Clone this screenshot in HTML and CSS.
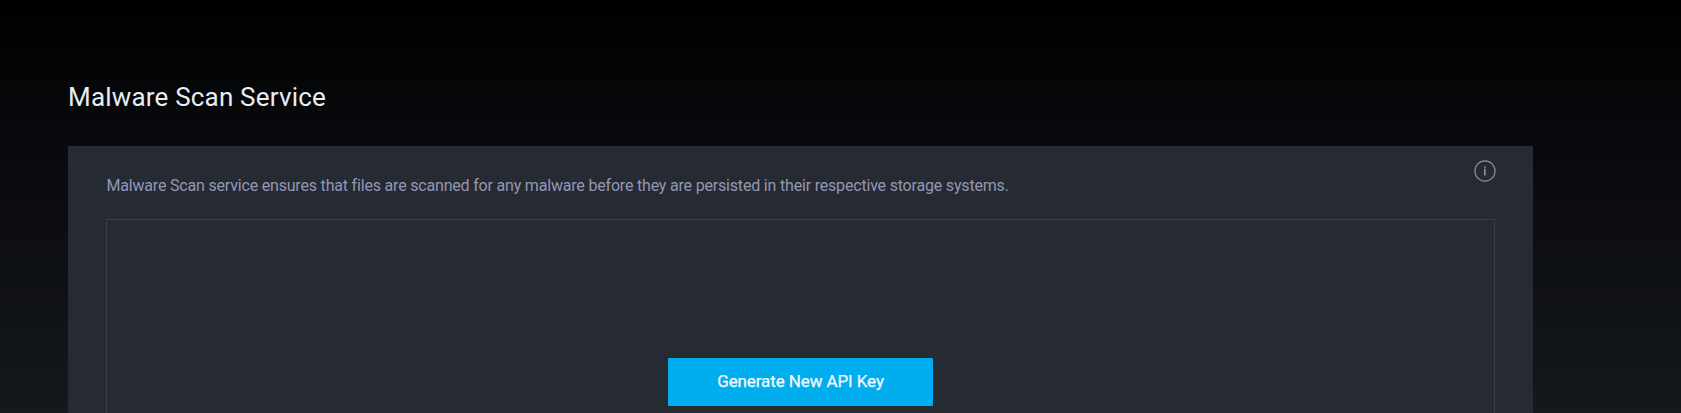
FILE: index.html
```html
<!DOCTYPE html>
<html lang="en">
<head>
<meta charset="utf-8">
<title>Malware Scan Service</title>
<link rel="stylesheet" href="styles.css">
</head>
<body>
<main class="page">
  <h1 class="title">Malware Scan Service</h1>
  <section class="panel">
    <svg class="info" viewBox="0 0 22 22" aria-label="Info"><circle cx="11" cy="11" r="10.1"/><path d="M10.8 8.8v6.7M10.8 6.2v1.5"/></svg>
    <p class="description">Malware Scan service ensures that files are scanned for any malware before they are persisted in their respective storage systems.</p>
    <div class="key-box"><button class="generate">Generate New API Key</button></div>
  </section>
</main>
</body>
</html>
```
FILE: styles.css
```css
* { box-sizing: border-box; }
body {
  margin: 0;
  background: #000;
  font-family: Roboto, sans-serif;
}
.page {
  display: flex;
  flex-direction: column;
  height: 413px;
  padding: 80px 148px 0 68px;
  background: linear-gradient(#000, #050608 20%, #15181c);
}
.title {
  margin: 0;
  height: 66px;
  font-size: 26px;
  font-weight: 400;
  line-height: 34px;
  letter-spacing: 0.19px;
  color: #e6edf4;
}
.panel {
  position: relative;
  display: flex;
  flex-direction: column;
  flex: 1;
  padding: 28px 38px 0;
  background: #262a33;
}
.info {
  position: absolute;
  top: 14.3px;
  right: 37.3px;
  width: 22px;
  height: 22px;
  fill: none;
  stroke: #909095;
  stroke-width: 1.2;
}
.info path { stroke-width: 1.7; }
.description {
  margin: 0 0 21px;
  padding-left: 0.5px;
  font-size: 16px;
  line-height: 24px;
  letter-spacing: -0.188px;
  color: #9497b3;
}
.key-box {
  display: flex;
  flex: 1;
  justify-content: center;
  align-items: flex-start;
  padding-top: 138px;
  border: 1px solid #3a3e4c;
  border-bottom: 0;
}
.generate {
  width: 265px;
  height: 48px;
  padding: 0 0 2px;
  border: 0;
  border-radius: 1px;
  background: #00adef;
  color: #f4faff;
  font: 400 17px Roboto, sans-serif;
  letter-spacing: -0.1px;
  -webkit-text-stroke: 0.25px #f4faff;
}
```
